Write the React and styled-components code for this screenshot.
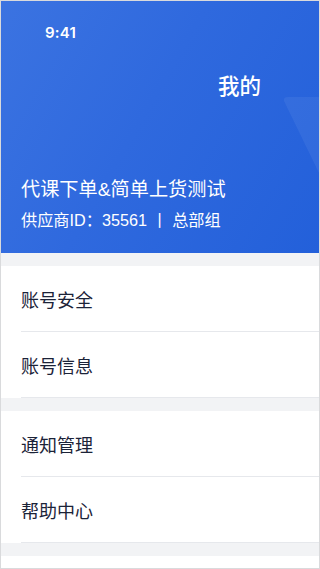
import React from "react";
import styled, { createGlobalStyle } from "styled-components";

const Global = createGlobalStyle`
  html, body { margin: 0; padding: 0; background: #ffffff; }
  * { box-sizing: border-box; }
  body { font-family: "Noto Sans CJK SC", "Noto Sans", sans-serif; }
`;

const Screen = styled.div`
  width: 320px;
  height: 569px;
  border: 1px solid #d9dadc;
  background: #ffffff;
  display: flex;
  flex-direction: column;
  overflow: hidden;
`;

const Header = styled.header`
  position: relative;
  height: 252px;
  flex-shrink: 0;
  display: flex;
  flex-direction: column;
  background: linear-gradient(120deg, #3b73e1 0%, #2f69de 45%, #2360da 100%);
  color: #ffffff;
  overflow: hidden;
`;

const Decoration = styled.svg`
  position: absolute;
  top: 96px;
  right: 0;
`;

const StatusBar = styled.div`
  height: 62px;
  display: flex;
  align-items: center;
  padding-left: 44px;
  font-family: Inter, "Liberation Sans", sans-serif;
  font-weight: 600;
  font-size: 15px;
  letter-spacing: 0.2px;
`;

const NavBar = styled.div`
  height: 42px;
  display: flex;
  align-items: center;
  padding-left: 217px;
  font-size: 21.5px;
  font-weight: 500;
`;

const UserInfo = styled.div`
  margin-top: auto;
  padding: 0 20px 22px;
  display: flex;
  flex-direction: column;
  gap: 4px;
  font-family: "Liberation Sans", "Noto Sans CJK SC", sans-serif;
`;

const Name = styled.div`
  font-size: 19.2px;
  line-height: 30px;
  font-weight: 400;
`;

const Meta = styled.div`
  font-size: 16.2px;
  line-height: 22px;
  font-weight: 400;
`;

const Gap = styled.div`
  height: 13px;
  flex-shrink: 0;
  background: #f2f3f5;
`;

const Group = styled.section`
  background: #ffffff;
  flex-shrink: 0;
`;

const Row = styled.div`
  height: 66px;
  margin-left: 20px;
  display: flex;
  align-items: center;
  border-bottom: 1px solid #e6e8ec;
  font-size: 18px;
  color: #1b2338;
`;

const Fill = styled.div`
  flex: 1;
  background: #ffffff;
`;

const groups = [
  ["账号安全", "账号信息"],
  ["通知管理", "帮助中心"],
];

export default function App() {
  return (
    <>
      <Global />
      <Screen>
        <Header>
          <Decoration width="36" height="76" viewBox="0 0 36 76">
            <path d="M1 4 Q0 0 5 0 L36 0 L36 76 Z" fill="#ffffff" fillOpacity="0.06" />
          </Decoration>
          <StatusBar>9:41</StatusBar>
          <NavBar>我的</NavBar>
          <UserInfo>
            <Name>代课下单&amp;简单上货测试</Name>
            <Meta>供应商ID：35561 丨 总部组</Meta>
          </UserInfo>
        </Header>
        {groups.map((items, i) => (
          <React.Fragment key={i}>
            <Gap />
            <Group>
              {items.map((t) => (
                <Row key={t}>{t}</Row>
              ))}
            </Group>
          </React.Fragment>
        ))}
        <Gap />
        <Fill />
      </Screen>
    </>
  );
}
